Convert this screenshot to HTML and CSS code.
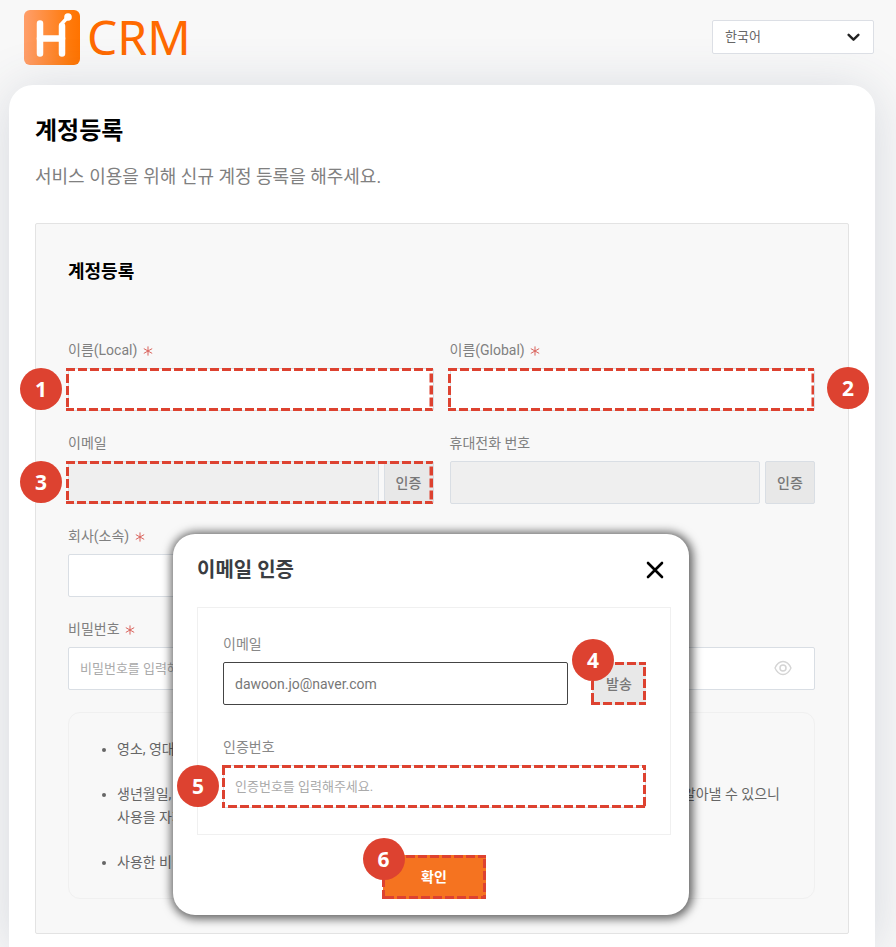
FILE: index.html
```html
<!DOCTYPE html>
<html lang="ko">
<head>
<meta charset="utf-8">
<meta name="viewport" content="width=device-width, initial-scale=1">
<title>계정등록</title>
<link rel="stylesheet" href="styles.css">
</head>
<body>
<svg class="sprite" aria-hidden="true">
  <symbol id="star" viewBox="0 0 10 10"><path d="M5 .4v9.2M.8 2.6l8.4 4.8M9.2 2.6L.8 7.4" fill="none" stroke="currentColor" stroke-width="1"/></symbol>
  <symbol id="eye" viewBox="0 0 18 16"><path d="M1 8C3 3.500 6 1.500 9 1.500S15 3.500 17 8c-2 4.500-5 6.500-8 6.500S3 12.500 1 8z" fill="none" stroke="currentColor" stroke-width="1.300"/><circle cx="9" cy="8" r="3" fill="none" stroke="currentColor" stroke-width="1.500"/></symbol>
</svg>

<header class="top">
  <a class="logo" href="#" aria-label="H CRM">
    <svg class="logo-mark" viewBox="0 0 56 55" aria-hidden="true">
      <defs><linearGradient id="lg" x1="0" y1="0" x2="1" y2="0"><stop offset="0" stop-color="#ff9f6b"/><stop offset=".8" stop-color="#ff7a0c"/><stop offset="1" stop-color="#ff7300"/></linearGradient></defs>
      <rect width="56" height="55" rx="6" fill="url(#lg)"/>
      <g fill="none" stroke="#fff" stroke-width="6.500" stroke-linecap="round" stroke-linejoin="round">
        <path d="M16 13.500v30M38 43.500V16"/>
        <path d="M16 28.500h22"/>
      </g>
      <path d="M37 14.500L44 7" fill="none" stroke="#fff" stroke-width="3.500" stroke-linecap="round"/>
      <circle cx="44" cy="7" r="3.800" fill="#fff"/>
    </svg>
    <span class="logo-text">CRM</span>
  </a>
  <div class="lang">
    <select aria-label="언어"><option>한국어</option><option>English</option></select>
    <svg class="chevron" viewBox="0 0 12 8" aria-hidden="true"><path d="M1.500 1.500L6 6l4.500-4.500" fill="none" stroke="#222" stroke-width="2.200" stroke-linecap="round" stroke-linejoin="round"/></svg>
  </div>
</header>

<main class="card">
  <h1>계정등록</h1>
  <p class="lead">서비스 이용을 위해 신규 계정 등록을 해주세요.</p>

  <section class="panel">
    <h2>계정등록</h2>
    <form class="grid">
      <div class="field">
        <label for="local">이름(Local) <svg class="star"><use href="#star"/></svg></label>
        <div class="control">
          <input id="local" type="text">
          <svg class="mark"><rect x="0" y="0" width="100%" height="100%"/></svg>
          <span class="badge before">1</span>
        </div>
      </div>
      <div class="field">
        <label for="global">이름(Global) <svg class="star"><use href="#star"/></svg></label>
        <div class="control">
          <input id="global" type="text">
          <svg class="mark"><rect x="0" y="0" width="100%" height="100%"/></svg>
          <span class="badge after">2</span>
        </div>
      </div>
      <div class="field">
        <label for="email">이메일</label>
        <div class="control">
          <input id="email" type="email" disabled>
          <button type="button" class="verify">인증</button>
          <svg class="mark"><rect x="0" y="0" width="100%" height="100%"/></svg>
          <span class="badge before">3</span>
        </div>
      </div>
      <div class="field">
        <label for="phone">휴대전화 번호</label>
        <div class="control">
          <input id="phone" type="tel" disabled>
          <button type="button" class="verify">인증</button>
        </div>
      </div>
      <div class="field first-col">
        <label for="company">회사(소속) <svg class="star"><use href="#star"/></svg></label>
        <div class="control"><input id="company" type="text"></div>
      </div>
      <div class="field first-col">
        <label for="pw">비밀번호 <svg class="star"><use href="#star"/></svg></label>
        <div class="control">
          <input id="pw" type="password" placeholder="비밀번호를 입력해주세요.">
          <button type="button" class="reveal" aria-label="비밀번호 보기"><svg><use href="#eye"/></svg></button>
        </div>
      </div>
      <div class="field">
        <label for="pw2">비밀번호 확인 <svg class="star"><use href="#star"/></svg></label>
        <div class="control">
          <input id="pw2" type="password" placeholder="비밀번호를 입력해주세요.">
          <button type="button" class="reveal" aria-label="비밀번호 보기"><svg><use href="#eye"/></svg></button>
        </div>
      </div>
    </form>
    <ul class="rules">
      <li>영소, 영대문자, 숫자, 특수문자를 조합하여 입력해주세요.</li>
      <li>생년월일, 전화번호 개인정보와 관련된 숫자, 연속된 숫자와 같이 쉬운 비밀번호는 다른 사람이 쉽게 알아낼 수 있으니<br>사용을 자제해주세요.</li>
      <li>사용한 비밀번호는 재사용할 수 없습니다.</li>
    </ul>

    <div class="modal" role="dialog" aria-labelledby="modal-title">
      <div class="modal-head">
        <h3 id="modal-title">이메일 인증</h3>
        <button type="button" class="close" aria-label="닫기"><svg viewBox="0 0 18 18"><path d="M2 2l14 14M16 2L2 16" fill="none" stroke="#000" stroke-width="2.600" stroke-linecap="round"/></svg></button>
      </div>
      <div class="modal-box">
        <div class="field">
          <label for="m-email">이메일</label>
          <div class="control spaced">
            <input id="m-email" class="focused" type="email" value="dawoon.jo@naver.com">
            <div class="send-wrap">
              <button type="button" class="send">발송</button>
              <svg class="mark flush"><rect x="0" y="0" width="100%" height="100%"/></svg>
              <span class="badge corner">4</span>
            </div>
          </div>
        </div>
        <div class="field">
          <label for="code">인증번호</label>
          <div class="control">
            <input id="code" type="text" placeholder="인증번호를 입력해주세요.">
            <svg class="mark flush"><rect x="0" y="0" width="100%" height="100%"/></svg>
            <span class="badge before near">5</span>
          </div>
        </div>
      </div>
      <div class="modal-foot">
        <div class="ok-wrap">
          <button type="button" class="ok">확인</button>
          <svg class="mark flush"><rect x="0" y="0" width="100%" height="100%"/></svg>
          <span class="badge corner low">6</span>
        </div>
      </div>
    </div>
  </section>
</main>
</body>
</html>
```
FILE: styles.css
```css
* { box-sizing: border-box; }

body {
  margin: 0;
  min-height: 100vh;
  display: flex;
  flex-direction: column;
  background: #f8f8f8;
  color: #000;
  font-family: Roboto, "Noto Sans CJK KR", sans-serif;
  font-size: 14px;
  line-height: 20px;
}

h1, h2, h3, p, ul { margin: 0; }

button, input, select { font: inherit; margin: 0; }

.sprite { position: absolute; width: 0; height: 0; }

.top {
  display: flex;
  justify-content: space-between;
  align-items: center;
  height: 85px;
  padding: 0 22px 11px 24px;
}

.logo {
  display: flex;
  align-items: center;
  gap: 7px;
  color: #ff6a00;
  text-decoration: none;
}

.logo-mark { width: 56px; height: 55px; }

.logo-text {
  font-family: "Noto Sans", "Open Sans", sans-serif;
  font-size: 48px;
  line-height: 56px;
}

.lang { position: relative; width: 162px; }

.lang select {
  appearance: none;
  display: block;
  width: 100%;
  height: 34px;
  padding: 0 12px;
  border: 1px solid #dcdfe5;
  border-radius: 2px;
  background: #fff;
  color: #666;
  font-size: 13px;
}

.chevron {
  position: absolute;
  right: 14px;
  top: 13px;
  width: 13px;
  height: 9px;
  pointer-events: none;
}

.card {
  flex: 1;
  margin: 0 21px 0 9px;
  padding: 28px 26px 13px;
  border-radius: 24px 24px 0 0;
  background: #fff;
  box-shadow: 0 4px 52px rgba(60, 80, 110, 0.18);
}

h1 { font-size: 24px; line-height: 36px; font-weight: 700; }

.lead {
  margin-top: 14px;
  color: #808080;
  font-size: 18px;
  line-height: 28px;
}

.panel {
  position: relative;
  margin-top: 32px;
  padding: 35px 33px 34px 32px;
  border: 1px solid #e3e3e3;
  border-radius: 2px;
  background: #f8f8f8;
}

h2 { font-size: 18px; line-height: 26px; font-weight: 700; }

.grid {
  display: grid;
  grid-template-columns: 1fr 1fr;
  gap: 22px 16px;
  margin-top: 55px;
}

.first-col { grid-column: 1; }

.field label {
  display: block;
  height: 20px;
  margin-bottom: 8px;
  color: #808080;
}

.star {
  width: 10px;
  height: 10px;
  margin-left: 2px;
  vertical-align: -1px;
  color: #d9635c;
}

.control { position: relative; display: flex; gap: 5px; }

.control input {
  flex: 1;
  min-width: 0;
  height: 43px;
  padding: 0 11px;
  border: 1px solid #d9dee4;
  border-radius: 2px;
  background: #fff;
  color: #777;
  font-size: 13px;
  outline: none;
}

.control input:disabled { background: #efefef; }
.control input::placeholder { color: #aaa; opacity: 1; }

.verify {
  width: 50px;
  padding: 0;
  border: 1px solid #d9dee4;
  border-radius: 2px;
  background: #e8e8e8;
  color: #777;
  font-weight: 500;
}

.reveal {
  position: absolute;
  right: 23px;
  top: 13px;
  width: 18px;
  height: 16px;
  padding: 0;
  border: 0;
  background: none;
  color: #d4d4d4;
}

.reveal svg { display: block; width: 18px; height: 16px; }

.rules {
  margin-top: 22px;
  padding: 25px 24px 24px 48px;
  border: 1px solid #f0f0f0;
  border-radius: 12px;
  color: #666;
  line-height: 23px;
}

.rules li + li { margin-top: 22px; }

/* Numbered callouts */
.mark {
  position: absolute;
  left: -2px;
  top: 0;
  width: calc(100% + 1px);
  height: 100%;
  pointer-events: none;
}

.mark.flush { left: -1px; }

.mark rect {
  fill: none;
  stroke: #dd4230;
  stroke-width: 6px;
  stroke-dasharray: 9 3;
}

.badge {
  position: absolute;
  display: flex;
  align-items: center;
  justify-content: center;
  width: 42px;
  height: 42px;
  border-radius: 50%;
  background: #dd4230;
  color: #fff;
  font-family: "Noto Sans", sans-serif;
  font-size: 21px;
  font-weight: 700;
  line-height: 42px;
}

.badge.before { left: -48px; top: 0; }
.badge.before.near { left: -46px; }
.badge.after { right: -54px; top: -1px; }
.badge.corner { left: -20px; top: -23px; }
.badge.corner.low { top: -17px; }

/* Email verification dialog */
.modal {
  position: absolute;
  left: calc(50% - 269px);
  top: 310px;
  width: 516px;
  padding: 21px 18px 16px 24px;
  border-radius: 22px;
  background: #fff;
  box-shadow: 1px 1px 10px 3px rgba(0, 0, 0, 0.6);
}

.modal-head {
  display: flex;
  justify-content: space-between;
  align-items: center;
  height: 30px;
  padding-right: 7px;
}

h3 { color: #3a3d42; font-size: 20px; line-height: 30px; font-weight: 700; }

.close { width: 18px; height: 18px; padding: 0; border: 0; background: none; }
.close svg { display: block; width: 18px; height: 18px; }

.modal-box {
  display: grid;
  gap: 32px;
  margin-top: 22px;
  padding: 26px 24px 26px 25px;
  border: 1px solid #f0f0f0;
}

.modal-box label { color: #888; }
.control.spaced { gap: 24px; }
.control input.focused { border: 1px solid #444; font-size: 14px; }

.send-wrap, .ok-wrap { position: relative; }

.send {
  width: 54px;
  height: 43px;
  padding: 0;
  border: 0;
  background: #e8e8e8;
  color: #777;
  font-weight: 500;
}

.modal-foot { display: flex; justify-content: center; margin-top: 20px; }

.ok {
  display: block;
  width: 103px;
  height: 44px;
  border: 0;
  background: #f57320;
  color: #fff;
  font-weight: 700;
}
```
